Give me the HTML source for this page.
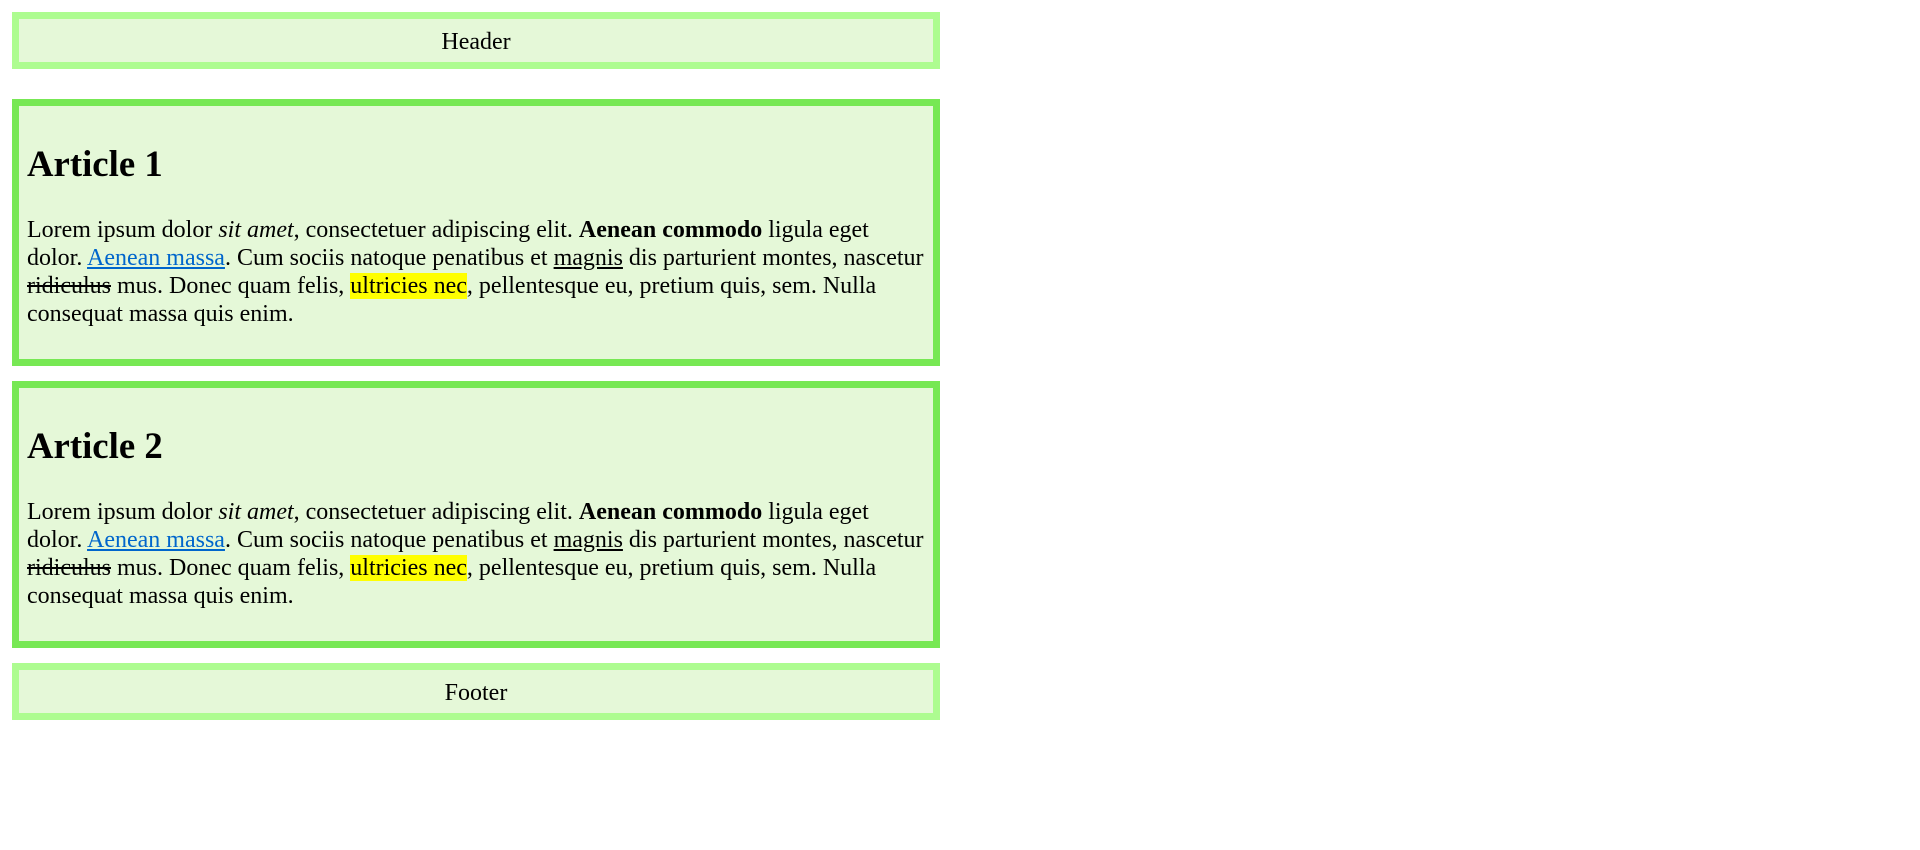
<!DOCTYPE html>
<html><head><meta charset="utf-8"><style>
body{margin:12px;font-family:"Liberation Serif",serif;font-size:24px;line-height:28.2px;background:#fff;color:#000}
.box{width:928px;box-sizing:border-box;background:#e5f8d8;border:7px solid #77e854;padding:6.5px 8px}
.box.hf{border-color:#adfc90;text-align:center;padding:8.5px 8px 0;height:57px}
header{margin-bottom:30px}
article{margin-bottom:15px;height:267px}
h1{font-size:36.75px;line-height:42px;margin:30.5px 0 30.5px}
p{margin:24.5px 0;white-space:nowrap;letter-spacing:0}
a{color:#0066cc;text-decoration:underline}
mark{background:#ffff00}
</style></head><body>
<header class="box hf">Header</header>
<article class="box"><h1>Article 1</h1><p>Lorem ipsum dolor <i>sit amet</i>, consectetuer adipiscing elit. <b>Aenean commodo</b> ligula eget<br>dolor. <a>Aenean massa</a>. Cum sociis natoque penatibus et <u>magnis</u> dis parturient montes, nascetur<br><s>ridiculus</s> mus. Donec quam felis, <mark>ultricies nec</mark>, pellentesque eu, pretium quis, sem. Nulla<br>consequat massa quis enim.</p></article>
<article class="box"><h1>Article 2</h1><p>Lorem ipsum dolor <i>sit amet</i>, consectetuer adipiscing elit. <b>Aenean commodo</b> ligula eget<br>dolor. <a>Aenean massa</a>. Cum sociis natoque penatibus et <u>magnis</u> dis parturient montes, nascetur<br><s>ridiculus</s> mus. Donec quam felis, <mark>ultricies nec</mark>, pellentesque eu, pretium quis, sem. Nulla<br>consequat massa quis enim.</p></article>
<footer class="box hf">Footer</footer>
</body></html>
